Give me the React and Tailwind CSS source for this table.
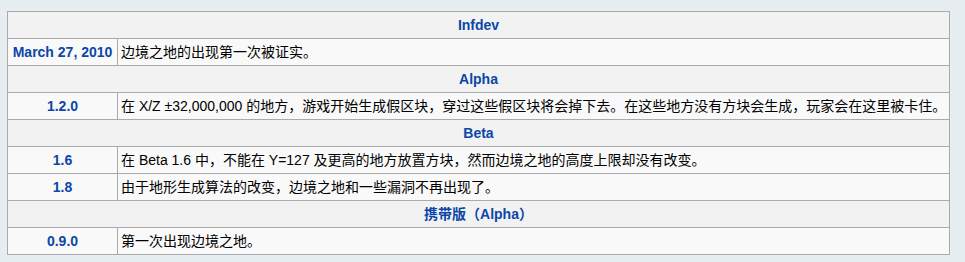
import React from "react";

const sections = [
  { title: "Infdev", rows: [["March 27, 2010", "边境之地的出现第一次被证实。"]] },
  {
    title: "Alpha",
    rows: [["1.2.0", "在 X/Z ±32,000,000 的地方，游戏开始生成假区块，穿过这些假区块将会掉下去。在这些地方没有方块会生成，玩家会在这里被卡住。"]],
  },
  {
    title: "Beta",
    rows: [
      ["1.6", "在 Beta 1.6 中，不能在 Y=127 及更高的地方放置方块，然而边境之地的高度上限却没有改变。"],
      ["1.8", "由于地形生成算法的改变，边境之地和一些漏洞不再出现了。"],
    ],
  },
  { title: "携带版（Alpha）", rows: [["0.9.0", "第一次出现边境之地。"]] },
];

export default function App() {
  return (
    <div
      className="w-[965px] h-[262px] bg-[#e6eef2] pt-[11px] pl-[7px]"
      style={{ fontFamily: '"Liberation Sans", Arial, "Noto Sans CJK SC", sans-serif' }}
    >
      <table className="w-[943px] border-collapse border border-[#aaaaaa] text-[14px] leading-[18px] text-black">
        <tbody>
          {sections.map((s) => (
            <React.Fragment key={s.title}>
              <tr className="h-[27px]">
                <th
                  colSpan={2}
                  className="border border-[#aaaaaa] bg-[#f2f2f2] text-center font-bold text-[#0b46a8] p-0"
                >
                  {s.title}
                </th>
              </tr>
              {s.rows.map(([v, d]) => (
                <tr key={v} className="h-[27px] bg-[#f9f9f9]">
                  <td className="w-[110px] border border-[#aaaaaa] text-center font-bold text-[#0b46a8] p-0 whitespace-nowrap">
                    {v}
                  </td>
                  <td className="border border-[#aaaaaa] pl-[3px] py-0 whitespace-nowrap">{d}</td>
                </tr>
              ))}
            </React.Fragment>
          ))}
        </tbody>
      </table>
    </div>
  );
}
